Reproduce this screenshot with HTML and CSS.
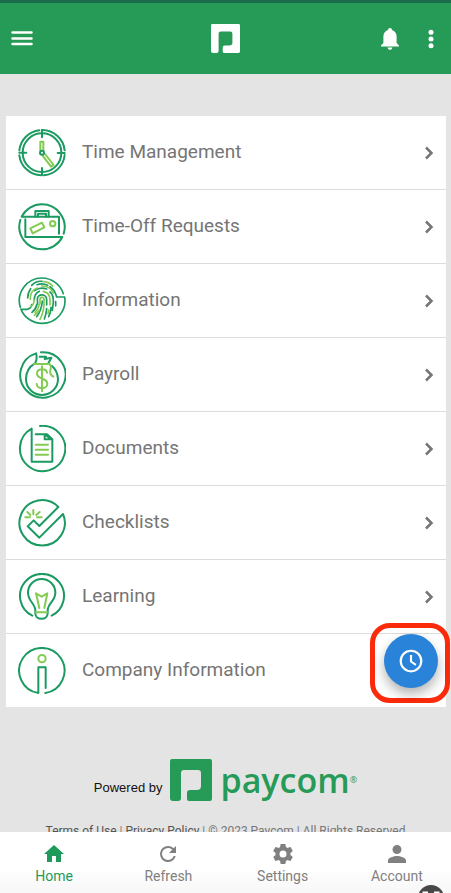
FILE: index.html
```html
<!DOCTYPE html>
<html lang="en">
<head>
<meta charset="utf-8">
<meta name="viewport" content="width=device-width, initial-scale=1">
<title>Paycom</title>
<link rel="stylesheet" href="styles.css">
</head>
<body>
<div class="app">
  <header class="topbar">
    <button class="icon-button" type="button" aria-label="Menu">
      <svg width="22" height="22" viewBox="0 0 22 22"><path class="bars" d="M1.500 4.500h19M1.500 10.500h19M1.500 16h19"/></svg>
    </button>
    <a class="brand" href="#" aria-label="Paycom home">
      <svg width="29" height="29" viewBox="0 0 42 42"><path fill="currentColor" fill-rule="evenodd" d="M2 0H40Q42 0 42 2V40Q42 42 40 42H19Q17 42 17 40V34Q17 31 20 31H27Q31 31 31 27V14Q31 11 28 11H14Q11 11 11 14V39Q11 42 8 42H3Q0 42 0 39V2Q0 0 2 0Z"/></svg>
    </a>
    <div class="topbar-actions">
      <button class="icon-button" type="button" aria-label="Notifications">
        <svg width="20" height="24" viewBox="0 0 20 24"><path fill="currentColor" d="M10 1c1.200 0 2 .8 2 1.900 3 .9 4.600 3.400 4.600 6.500v6.600l2.400 2.400v1H1v-1L3.400 16V9.400C3.400 6.300 5 3.800 8 2.900 8 1.800 8.800 1 10 1zM7.700 20.600h4.600c0 1.300-1 2.300-2.300 2.300s-2.300-1-2.300-2.300z"/></svg>
      </button>
      <button class="icon-button" type="button" aria-label="More options">
        <svg width="6" height="20" viewBox="0 0 6 20" fill="currentColor"><circle cx="3" cy="3.300" r="2.500"/><circle cx="3" cy="10" r="2.500"/><circle cx="3" cy="16.700" r="2.500"/></svg>
      </button>
    </div>
  </header>

  <main class="content">
    <ul class="menu">
      <li><a class="menu-item" href="#">
        <svg class="glyph" viewBox="55 57 144 144">
          <path d="M59 121A68 68 0 0 1 119 61M127 60A68 68 0 0 1 195 121M195 135A68 68 0 0 1 133 196M124 196A68 68 0 0 1 59 136"/>
          <circle cx="127" cy="128" r="58"/>
          <path d="M127 60V82M127 174V196M59 128H80M174 129H195"/>
          <path class="light" d="M122 120V95H131V120M129 137L154 170 162 165 136 132"/>
          <circle cx="127" cy="128" r="6"/>
        </svg>
        <span>Time Management</span>
        <svg class="chevron" viewBox="0 0 10 14"><path d="M2 1.500L7.500 7 2 12.500"/></svg>
      </a></li>
      <li><a class="menu-item" href="#">
        <svg class="glyph" viewBox="55 279 144 144">
          <path d="M178 371V320H66A68 68 0 0 1 127 283A68 68 0 0 1 192 371M77 328V381H188A68 68 0 0 1 127 418A68 68 0 0 1 62 330"/>
          <path d="M107 320V303H147V320M115 320V311H139V320"/>
          <path class="light" d="M92 355L127 338 134 352 99 370Z"/>
          <circle class="light" cx="159" cy="341" r="8"/>
        </svg>
        <span>Time-Off Requests</span>
        <svg class="chevron" viewBox="0 0 10 14"><path d="M2 1.500L7.500 7 2 12.500"/></svg>
      </a></li>
      <li><a class="menu-item" href="#">
        <svg class="glyph fine" viewBox="55 51 144 144">
          <path d="M191 101A68 68 0 0 0 127 54A68 68 0 0 0 62 142M64 148A68 68 0 0 0 127 190A68 68 0 0 0 195 111H171Q165 88 151 80M64 148H82Q94 146 96 134"/>
          <path d="M96 76Q109 62 127 64M112 74Q128 68 144 76M84 114Q84 98 93 86M105 92Q121 80 141 87M104 119Q104 101 119 94M151 96Q162 105 161 126L158 151M114 132L113 118C113 100 141 100 141 119V135M97 157Q110 145 112 132M168 125V137M128 123Q126 150 111 170M141 146Q140 162 134 177M154 142Q153 159 147 170"/>
          <path class="light" d="M131 65Q149 66 159 78M92 118Q91 92 113 84M126 78Q151 77 161 99M94 140Q104 132 103 119M131 94Q151 98 151 120V135M119 150Q113 160 104 166M121 132V119C121 110 133 110 133 119Q135 152 121 178M106 157Q116 146 119 134M147 150L145 160"/>
        </svg>
        <span>Information</span>
        <svg class="chevron" viewBox="0 0 10 14"><path d="M2 1.500L7.500 7 2 12.500"/></svg>
      </a></li>
      <li><a class="menu-item" href="#">
        <svg class="glyph" viewBox="55 273 144 144">
          <path d="M124 277A68 68 0 1 1 109 280Q114 298 106 310C88 320 79 338 79 357A48 48 0 0 0 175 357Q174 333 157 318"/>
          <path d="M120 290H139L135 297 155 293 146 310"/>
          <path class="light" d="M102 312H149Q156 318 152 330Q149 344 161 350M127 319V394M142 338C140 323 112 324 112 341C112 359 143 352 143 371C143 389 113 389 111 372"/>
        </svg>
        <span>Payroll</span>
        <svg class="chevron" viewBox="0 0 10 14"><path d="M2 1.500L7.500 7 2 12.500"/></svg>
      </a></li>
      <li><a class="menu-item" href="#">
        <svg class="glyph" viewBox="55 45 144 144">
          <path d="M121 48A68 68 0 1 1 96 56V155H158V88L142 73H108M135 73V88H158M137 75L154 87"/>
          <path class="light" d="M108 104H145M108 119H145M108 134H145"/>
        </svg>
        <span>Documents</span>
        <svg class="chevron" viewBox="0 0 10 14"><path d="M2 1.500L7.500 7 2 12.500"/></svg>
      </a></li>
      <li><a class="menu-item" href="#">
        <svg class="glyph" viewBox="55 267 144 144">
          <path d="M190 312A68 68 0 1 1 176 291L119 348 102 331 84 349 119 383Z"/>
          <path class="light" d="M77 322H91M83 306L92 315M101 300V313M120 306L110 315M112 322H126"/>
        </svg>
        <span>Checklists</span>
        <svg class="chevron" viewBox="0 0 10 14"><path d="M2 1.500L7.500 7 2 12.500"/></svg>
      </a></li>
      <li><a class="menu-item" href="#">
        <svg class="glyph" viewBox="55 39 144 144">
          <path d="M98 167A66 66 0 1 1 156 167M107 152C107 130 85 124 85 98A41 41 0 0 1 167 98C167 124 144 130 144 152V160C144 182 107 182 107 160Z"/>
          <path class="light" d="M108 157H143M119 144L109 100 126 110 143 100 134 144"/>
        </svg>
        <span>Learning</span>
        <svg class="chevron" viewBox="0 0 10 14"><path d="M2 1.500L7.500 7 2 12.500"/></svg>
      </a></li>
      <li><a class="menu-item" href="#">
        <svg class="glyph" viewBox="55 261 144 144">
          <path d="M138 384V322H116V399A68 68 0 1 1 137 399"/>
          <circle class="light" cx="127" cy="296" r="11"/>
        </svg>
        <span>Company Information</span>
      </a></li>
    </ul>

    <footer class="footer">
      <div class="powered">
        <span class="powered-label">Powered by</span>
        <svg class="powered-mark" width="42" height="42" viewBox="0 0 42 42"><path fill="currentColor" fill-rule="evenodd" d="M2 0H40Q42 0 42 2V40Q42 42 40 42H19Q17 42 17 40V34Q17 31 20 31H27Q31 31 31 27V14Q31 11 28 11H14Q11 11 11 14V39Q11 42 8 42H3Q0 42 0 39V2Q0 0 2 0Z"/></svg>
        <span class="wordmark">paycom<sup>®</sup></span>
      </div>
      <p class="legal"><a href="#">Terms of Use</a> | <a href="#">Privacy Policy</a> | © 2023 Paycom | All Rights Reserved</p>
    </footer>
  </main>

  <nav class="tabs">
    <a class="tab active" href="#">
      <svg viewBox="0 0 24 24"><path d="M10 20v-6h4v6h5v-8h3L12 3 2 12h3v8z"/></svg>
      <span>Home</span>
    </a>
    <a class="tab" href="#">
      <svg viewBox="0 0 24 24"><path d="M17.650 6.350A7.960 7.960 0 0 0 12 4a8 8 0 1 0 7.730 10h-2.080A6 6 0 1 1 12 6c1.660 0 3.140.69 4.220 1.780L13 11h7V4z"/></svg>
      <span>Refresh</span>
    </a>
    <a class="tab" href="#">
      <svg viewBox="0 0 24 24"><path d="M19.430 12.980c.04-.32.07-.64.07-.98s-.03-.66-.07-.98l2.110-1.650c.19-.15.24-.42.12-.64l-2-3.460c-.12-.22-.39-.3-.61-.22l-2.490 1c-.52-.4-1.080-.73-1.690-.98l-.38-2.650C14.460 2.180 14.250 2 14 2h-4c-.25 0-.46.18-.49.42l-.38 2.650c-.61.25-1.170.59-1.690.98l-2.490-1c-.23-.09-.49 0-.61.22l-2 3.460c-.13.22-.07.49.12.64l2.110 1.650c-.04.32-.07.65-.07.98s.03.66.07.98l-2.110 1.650c-.19.15-.24.42-.12.64l2 3.460c.12.22.39.3.61.22l2.490-1c.52.4 1.080.73 1.690.98l.38 2.650c.03.24.24.42.49.42h4c.25 0 .46-.18.49-.42l.38-2.650c.61-.25 1.170-.59 1.690-.98l2.490 1c.23.09.49 0 .61-.22l2-3.460c.12-.22.07-.49-.12-.64l-2.110-1.650zM12 15.500A3.500 3.500 0 1 1 12 8.500a3.500 3.500 0 0 1 0 7z"/></svg>
      <span>Settings</span>
    </a>
    <a class="tab" href="#">
      <svg viewBox="0 0 24 24"><path d="M12 12a4.500 4.500 0 1 0 0-9 4.500 4.500 0 0 0 0 9zm0 2c-3 0-9 1.500-9 4.500V21h18v-2.500c0-3-6-4.500-9-4.500z"/></svg>
      <span>Account</span>
    </a>
  </nav>

  <div class="punch">
    <button class="punch-button" type="button" aria-label="Punch clock">
      <svg width="26" height="26" viewBox="0 0 24 24"><circle cx="12" cy="12" r="9.500"/><path d="M12 6.500V12.500L16.500 15.500"/></svg>
    </button>
  </div>
  <button class="expand" type="button" aria-label="Full screen">
    <svg width="26" height="26" viewBox="0 0 26 26"><path d="M6 12V8H10M16 8H20V12M6 16V20H10M16 20H20V16"/></svg>
  </button>
</div>
</body>
</html>
```
FILE: styles.css
```css
* {
  box-sizing: border-box;
}

body {
  margin: 0;
  font-family: Roboto, "Liberation Sans", sans-serif;
  background: #e4e4e4;
}

a {
  color: inherit;
  text-decoration: none;
}

button {
  border: 0;
  padding: 0;
  background: none;
  color: inherit;
}

svg {
  display: block;
}

.app {
  position: relative;
  display: flex;
  flex-direction: column;
  height: 100vh;
  overflow: hidden;
}

/* Top bar */
.topbar {
  display: grid;
  grid-template-columns: 1fr auto 1fr;
  align-items: center;
  flex: none;
  height: 74px;
  padding: 0 17px 0 11px;
  border-top: 3px solid #1a6c4a;
  background: #269a57;
  color: #fff;
}

.bars {
  stroke: currentColor;
  stroke-width: 2.5;
  stroke-linecap: round;
}

.brand {
  margin-left: 6px;
}

.topbar-actions {
  display: flex;
  justify-content: flex-end;
  align-items: center;
  gap: 28px;
}

/* Menu list */
.content {
  flex: 1;
  min-height: 0;
  overflow: hidden;
}

.menu {
  margin: 42px 5px 0 6px;
  padding: 0;
  list-style: none;
  background: #fff;
}

.menu li + li {
  border-top: 1px solid #dcdcdc;
}

.menu-item {
  display: flex;
  align-items: center;
  gap: 16px;
  height: 73px;
  padding: 0 12px;
  font-size: 19px;
  line-height: 24px;
  color: #757575;
}

.menu-item span {
  flex: 1;
  margin-bottom: 2px;
}

.glyph {
  width: 48px;
  height: 48px;
  fill: none;
  stroke: #1b9a62;
  stroke-width: 6;
  stroke-linecap: round;
  stroke-linejoin: round;
}

.glyph.fine {
  stroke-width: 5;
}

.glyph .light {
  stroke: #83cb50;
}

.chevron {
  width: 10px;
  height: 14px;
  fill: none;
  stroke: #757575;
  stroke-width: 2.5;
}

/* Footer */
.footer {
  padding-top: 52px;
  text-align: center;
}

.powered {
  display: flex;
  justify-content: center;
  align-items: center;
  color: #269a57;
}

.powered-label {
  margin: 16px 8px 0 0;
  font-family: "Liberation Sans", sans-serif;
  font-size: 13px;
  line-height: 20px;
  color: #111;
}

.wordmark {
  margin-left: 8px;
  font-family: "Open Sans", "Noto Sans", sans-serif;
  font-size: 34px;
  font-weight: 600;
  line-height: 42px;
}

.wordmark sup {
  font-size: 9px;
  font-weight: 400;
  line-height: 10px;
  vertical-align: 10px;
}

.legal {
  margin: 22px 0 0;
  font-size: 12px;
  line-height: 16px;
  color: #777;
}

.legal a {
  color: #555;
}

/* Bottom tabs */
.tabs {
  display: grid;
  grid-template-columns: repeat(4, 1fr);
  flex: none;
  height: 61px;
  margin: 0 -3px;
  padding-top: 10px;
  background: linear-gradient(#fff 60%, #f7f7f7);
}

.tab {
  display: flex;
  flex-direction: column;
  align-items: center;
  gap: 2px;
  font-size: 14px;
  line-height: 16px;
  color: #808080;
}

.tab svg {
  width: 24px;
  height: 24px;
  fill: currentColor;
}

.tab.active {
  color: #1f9a5a;
}

/* Floating controls */
.punch {
  position: absolute;
  right: 1px;
  bottom: 190px;
  display: grid;
  place-items: center;
  width: 80px;
  height: 80px;
  padding: 0 0 5px 2px;
  border: 5px solid #fa2a0a;
  border-radius: 20px;
}

.punch-button {
  display: grid;
  place-items: center;
  width: 54px;
  height: 54px;
  border-radius: 50%;
  background: #2983d8;
  box-shadow: 0 6px 12px rgba(0, 0, 0, 0.3);
}

.punch-button svg {
  fill: none;
  stroke: #fff;
  stroke-width: 2;
}

.expand {
  position: absolute;
  right: 7px;
  bottom: -18px;
  border-radius: 50%;
  background: #484848;
}

.expand path {
  fill: none;
  stroke: #fff;
  stroke-width: 3;
}
```
